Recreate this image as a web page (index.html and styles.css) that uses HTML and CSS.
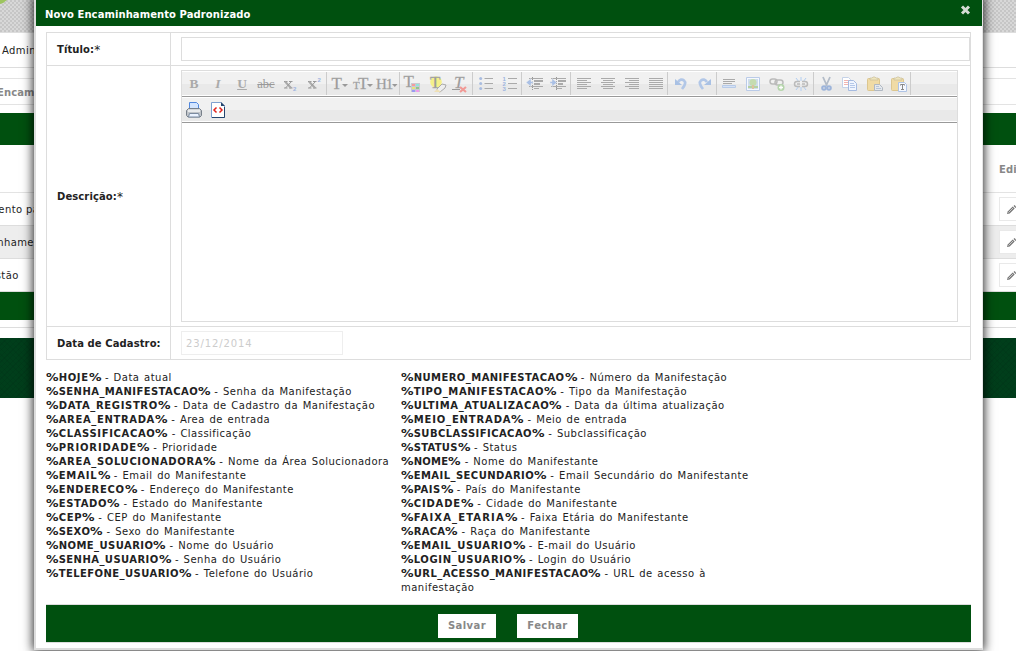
FILE: index.html
```
<!DOCTYPE html>
<html lang="pt-BR">
<head>
<meta charset="utf-8">
<title>Novo Encaminhamento Padronizado</title>
<link rel="stylesheet" href="styles.css">
</head>
<body>
<div class="page">
  <div class="banner"><svg class="leaf" width="9" height="6"><path d="M0 0h7Q4 3 0 4z" fill="#9dc45f"/></svg></div>
  <div class="nav">Administração</div>
  <div class="crumb"><span class="crumb-text">Encaminhamentos</span></div>
  <div class="bar bar-top"></div>
  <div class="list-head"><b>Editar</b></div>
  <div class="list-row"><span class="name n1">Encaminhamento padrão</span><span class="edit"><svg width="12" height="12" viewBox="0 0 12 12"><path d="M2 10l.7-2.500 5-5 2 2-5 5z" fill="#777"/><path d="M8.500 2l1-1 2 2-1 1z" fill="#777"/><path d="M3.500 8.500l4.500-4.500" stroke="#ddd" stroke-width=".8"/></svg></span></div>
  <div class="list-row alt"><span class="name n2">Encaminhamento</span><span class="edit"><svg width="12" height="12" viewBox="0 0 12 12"><path d="M2 10l.7-2.500 5-5 2 2-5 5z" fill="#777"/><path d="M8.500 2l1-1 2 2-1 1z" fill="#777"/><path d="M3.500 8.500l4.500-4.500" stroke="#ddd" stroke-width=".8"/></svg></span></div>
  <div class="list-row"><span class="name n3">Gestão</span><span class="edit"><svg width="12" height="12" viewBox="0 0 12 12"><path d="M2 10l.7-2.500 5-5 2 2-5 5z" fill="#777"/><path d="M8.500 2l1-1 2 2-1 1z" fill="#777"/><path d="M3.500 8.500l4.500-4.500" stroke="#ddd" stroke-width=".8"/></svg></span></div>
  <div class="bar bar-bottom"></div>
  <div class="footer"></div>
</div>

<div class="modal">
  <div class="modal-head"><span>Novo Encaminhamento Padronizado</span>
    <svg class="close" width="11" height="10" viewBox="0 0 11 10"><path d="M2 1.5l7 7M9 1.5l-7 7" stroke="#d5dcd5" stroke-width="3"/></svg>
  </div>
  <div class="form">
    <div class="label">Título:<i>*</i></div>
    <div class="field"><div class="input"></div></div>
    <div class="label">Descrição:<i>*</i></div>
    <div class="field">
      <div class="editor">
        <div class="tools">
          <div class="group">
            <span class="btn"><b class="g">B</b></span><span class="btn"><em class="g">I</em></span><span class="btn"><u class="g">U</u></span><span class="btn"><s class="g abc">abc</s></span>
            <span class="btn"><svg viewBox="0 0 24 24"><path d="M7.500 9.500l6 6.500M6 9.500h3.500M11 9.500h3.500M6 16h3.500M11 16h3.500" stroke="#999" fill="none"/><path d="M7 9.500l6 6.500" stroke="#aaa" stroke-width="2"/><path d="M13.500 9.500L7.500 16" stroke="#999"/><text x="15" y="19" class="num">2</text></svg></span>
            <span class="btn"><svg viewBox="0 0 24 24"><path d="M7.500 9.500l6 6.500M6 9.500h3.500M11 9.500h3.500M6 16h3.500M11 16h3.500" stroke="#999" fill="none"/><path d="M7 9.500l6 6.500" stroke="#aaa" stroke-width="2"/><path d="M13.500 9.500L7.500 16" stroke="#999"/><text x="15.500" y="10" class="num">2</text></svg></span>
          </div>
          <div class="group">
            <span class="btn"><svg viewBox="0 0 24 24"><text x="4.500" y="17" class="t">T</text><path d="M15 12h6l-3 3z" fill="#999"/></svg></span>
            <span class="btn"><svg viewBox="0 0 24 24"><text x="2" y="17" class="t small">T</text><text x="7" y="17" class="t">T</text><path d="M16 12h6l-3 3z" fill="#999"/></svg></span>
            <span class="btn"><svg viewBox="0 0 24 24"><text x="1" y="17" class="t h">H1</text><path d="M17 12h5.500l-2.700 3z" fill="#999"/></svg></span>
          </div>
          <div class="group">
            <span class="btn"><svg viewBox="0 0 24 24"><text x="3.500" y="15" class="t">T</text><path d="M11 11h9v9h-9z" fill="#c9c9d2"/><path d="M12 12h3v2h-3z" fill="#f59c9c"/><path d="M16 12h3v2h-3z" fill="#8fe6dc"/><path d="M12 15h3v2h-3z" fill="#e4e47c"/><path d="M16 15h3v2h-3z" fill="#93c58c"/><path d="M12 18h3v2h-3z" fill="#9a9af2"/><path d="M16 18h3v2h-3z" fill="#ee9cec"/></svg></span>
            <span class="btn"><svg viewBox="0 0 24 24"><circle cx="12" cy="10" r="5.800" fill="#f5f08a"/><text x="6" y="16" class="t">T</text><path d="M13 17l5-5 4 1-1 3-5 4-3-1z" fill="#eee" stroke="#aaa"/><path d="M10 20l3-3 4 3z" fill="#efe0b5"/></svg></span>
            <span class="btn"><svg viewBox="0 0 24 24"><text x="6" y="16" class="t it">T</text><path d="M4 17.500h8" stroke="#999"/><path d="M12 15l6 5M18 15l-6 5" stroke="#f19a96" stroke-width="2.200"/></svg></span>
          </div>
          <div class="group">
            <span class="btn"><svg viewBox="0 0 24 24"><path d="M11.500 6.500H20M11.500 11.500H20M11.500 16.500H20" stroke="#aaa"/><g fill="#a9bde0"><circle cx="7.700" cy="6.500" r="1.500"/><circle cx="7.700" cy="11.500" r="1.500"/><circle cx="7.700" cy="16.500" r="1.500"/></g></svg></span>
            <span class="btn"><svg viewBox="0 0 24 24"><path d="M11 6.500h9M11 11.500h9M11 16.500h9" stroke="#aaa"/><text x="5.500" y="9" class="num">1</text><text x="5.500" y="14" class="num">2</text><text x="5.500" y="19" class="num">3</text></svg></span>
          </div>
          <div class="group">
            <span class="btn"><svg viewBox="0 0 24 24"><path d="M7 6.500h14M12 16.500h5M7 14.500h14" stroke="#aaa"/><path d="M12 9h9M12 12h6" stroke="#aaa" stroke-width="2"/><path d="M10.500 5v14" stroke="#999" stroke-dasharray="1 1"/><path d="M4 10.500l5-4v3h2v2H9v3z" fill="#aac0e5" stroke="#efefef" stroke-width=".5"/></svg></span>
            <span class="btn"><svg viewBox="0 0 24 24"><path d="M5 6.500h15M10 16.500h6M5 14.500h15" stroke="#aaa"/><path d="M12 9h8M12 12h5" stroke="#aaa" stroke-width="2"/><path d="M10.500 5v14" stroke="#999" stroke-dasharray="1 1"/><path d="M11 10.500l-5-4v3H4v2h2v3z" fill="#aac0e5" stroke="#efefef" stroke-width=".5"/></svg></span>
          </div>
          <div class="group lines">
            <span class="btn"><svg viewBox="0 0 24 24"><path d="M6 6.500h14M6 8.500h10M6 10.500h14M6 12.500h10M6 14.500h14M6 16.500h10"/></svg></span>
            <span class="btn"><svg viewBox="0 0 24 24"><path d="M6 6.500h14M8 8.500h10M6 10.500h14M8 12.500h10M6 14.500h14M8 16.500h10"/></svg></span>
            <span class="btn"><svg viewBox="0 0 24 24"><path d="M6 6.500h14M10 8.500h10M6 10.500h14M10 12.500h10M6 14.500h14M10 16.500h10"/></svg></span>
            <span class="btn"><svg viewBox="0 0 24 24"><path d="M6 6.500h14M6 8.500h14M6 10.500h14M6 12.500h14M6 14.500h14M6 16.500h14"/></svg></span>
          </div>
          <div class="group">
            <span class="btn"><svg viewBox="0 0 24 24"><path d="M10 10q3-4 6-1.500t-2 8.500" fill="none" stroke="#b2c7e7" stroke-width="2.700"/><path d="M7 7v6h7z" fill="#a9c1e4"/></svg></span>
            <span class="btn"><svg viewBox="0 0 24 24"><path d="M15 10q-3-4-6-1.500t2 8.500" fill="none" stroke="#b2c7e7" stroke-width="2.700"/><path d="M19 7v6h-7z" fill="#a9c1e4"/></svg></span>
          </div>
          <div class="group">
            <span class="btn"><svg viewBox="0 0 24 24"><path d="M6 7.500h12M6 9.500h12M6 11.500h9" stroke="#aaa"/><path d="M5.500 13.500h13v2h-13z" fill="#d6e2f5" stroke="#b7cbe9"/></svg></span>
            <span class="btn"><svg viewBox="0 0 24 24"><path d="M5.500 5.500h13v13h-13z" fill="#f6f9fe" stroke="#bacbe8"/><path d="M7 7h10v10H7z" fill="#cfdded"/><circle cx="12" cy="10.500" r="3.500" fill="#c5dcb0"/><path d="M7 14h10v2H7z" fill="#b5d2a2"/><path d="M11 13h2v4h-2z" fill="#dcc3a0"/></svg></span>
            <span class="btn"><svg viewBox="0 0 24 24"><g fill="none" stroke="#bbb" stroke-width="1.500"><rect x="5" y="7" width="7" height="5" rx="2.500"/><rect x="10" y="8" width="8" height="5" rx="2.500"/></g><circle cx="16" cy="15.500" r="3.500" fill="#b5d5ab"/><path d="M14 15.500h4M16 13.500v4" stroke="#fff" stroke-width="1.300"/></svg></span>
            <span class="btn"><svg viewBox="0 0 24 24"><path d="M7 6l3 4M12 5v4M17 6l-3 4M7 18l3-4M12 19v-4M17 18l-3-4" stroke="#b2cef1"/><path d="M11 9.500H8q-2.500 0-2.500 2.500T8 14.500h3M13 9.500h3q2.500 0 2.500 2.500T16 14.500h-3M8 12h3M13 12h3" fill="none" stroke="#bbb" stroke-width="1.500"/></svg></span>
          </div>
          <div class="group">
            <span class="btn"><svg viewBox="0 0 24 24"><path d="M9 5l4 9M16 5l-4 9" stroke="#b3bcc8" stroke-width="1.800"/><g fill="none" stroke="#9db4da" stroke-width="2"><circle cx="10" cy="16" r="1.800"/><circle cx="15" cy="16" r="1.800"/></g></svg></span>
            <span class="btn"><svg viewBox="0 0 24 24"><path d="M4.500 5.500h6l2 2v8h-8z" fill="#fff" stroke="#c5d2e8"/><path d="M6 8.500h5M6 10.500h5M6 12.500h5" stroke="#f2b5b1"/><path d="M10.500 8.500h5l3 3v7h-8z" fill="#f0f5ff" stroke="#a6bbe0"/><path d="M12 11.500h4M12 13.500h5M12 15.500h5" stroke="#b5c8e8"/></svg></span>
            <span class="btn"><svg viewBox="0 0 24 24"><rect x="5.500" y="6.500" width="12" height="12" rx="1" fill="#f0dba5" stroke="#dcc68f"/><path d="M8 8V6h2l1-1h2l1 1h2v2z" fill="#eee5be" stroke="#c8bd9b" stroke-width=".7"/><path d="M12.500 12.500h5l3 3v3h-8z" fill="#e5e8ec" stroke="#b0b8c2"/><path d="M14 14.500h3M14 16.500h5" stroke="#b7c5d8"/></svg></span>
            <span class="btn"><svg viewBox="0 0 24 24"><rect x="5.500" y="6.500" width="12" height="12" rx="1" fill="#f0dba5" stroke="#dcc68f"/><path d="M8 8V6h2l1-1h2l1 1h2v2z" fill="#eee5be" stroke="#c8bd9b" stroke-width=".7"/><path d="M12.500 10.500h6l2 2v7h-8z" fill="#f5f8ff" stroke="#afc4e6"/><path d="M14.500 13.500v-1h4v1M16.500 12.500v5M15 17.500h3" fill="none" stroke="#888"/></svg></span>
          </div>
        </div>
        <div class="tools second">
          <span class="btn"><svg viewBox="0 0 24 24"><path d="M7.500 10V3.500h7l2 2V10z" fill="#d3e5ff" stroke="#5187dd"/><path d="M4.500 11.500l2-2h11l2 2v5l-1.500 1.500H6l-1.500-1.500z" fill="#bfc3c8" stroke="#777f89"/><path d="M6 10.500h12V13H6z" fill="#e9ebed"/><path d="M7.500 14.500h9l1 3.500h-11z" fill="#eaf2ff" stroke="#7b8ba0"/></svg></span>
          <span class="btn"><svg viewBox="0 0 24 24"><path d="M5.500 3.500h9.500l3.500 3.500v11.500h-13z" fill="#fff" stroke="#7ea0d0"/><path d="M6 18.500h12.500V8" fill="none" stroke="#24446d"/><path d="M15 3v4h4z" fill="#26456d"/><path d="M10.500 8.500L8 11l2.500 2.500M13.500 8.500L16 11l-2.500 2.500" fill="none" stroke="#e2231d" stroke-width="1.500"/></svg></span>
        </div>
        <div class="canvas"></div>
      </div>
    </div>
    <div class="label">Data de Cadastro:</div>
    <div class="field"><div class="input date">23/12/2014</div></div>
  </div>
  <div class="vars">
    <div class="col">
      <p class="s2"><b><i>%</i>HOJE<i>%</i></b> - Data atual</p>
      <p class="s1"><b><i>%</i>SENHA_MANIFESTACAO<i>%</i></b> - Senha da Manifestação</p>
      <p class="s2"><b><i>%</i>DATA_REGISTRO<i>%</i></b> - Data de Cadastro da Manifestação</p>
      <p class="s2"><b><i>%</i>AREA_ENTRADA<i>%</i></b> - Area de entrada</p>
      <p class="s2"><b><i>%</i>CLASSIFICACAO<i>%</i></b> - Classificação</p>
      <p class="s3"><b><i>%</i>PRIORIDADE<i>%</i></b> - Prioridade</p>
      <p class="s2"><b><i>%</i>AREA_SOLUCIONADORA<i>%</i></b> - Nome da Área Solucionadora</p>
      <p class="s3"><b><i>%</i>EMAIL<i>%</i></b> - Email do Manifestante</p>
      <p class="s2"><b><i>%</i>ENDERECO<i>%</i></b> - Endereço do Manifestante</p>
      <p class="s2"><b><i>%</i>ESTADO<i>%</i></b> - Estado do Manifestante</p>
      <p class="s2"><b><i>%</i>CEP<i>%</i></b> - CEP do Manifestante</p>
      <p class="s1"><b><i>%</i>SEXO<i>%</i></b> - Sexo do Manifestante</p>
      <p class="s1"><b><i>%</i>NOME_USUARIO<i>%</i></b> - Nome do Usuário</p>
      <p class="s1"><b><i>%</i>SENHA_USUARIO<i>%</i></b> - Senha do Usuário</p>
      <p class="s1"><b><i>%</i>TELEFONE_USUARIO<i>%</i></b> - Telefone do Usuário</p>
    </div>
    <div class="col">
      <p class="s1"><b><i>%</i>NUMERO_MANIFESTACAO<i>%</i></b> - Número da Manifestação</p>
      <p class="s2"><b><i>%</i>TIPO_MANIFESTACAO<i>%</i></b> - Tipo da Manifestação</p>
      <p class="s2"><b><i>%</i>ULTIMA_ATUALIZACAO<i>%</i></b> - Data da última atualização</p>
      <p class="s3"><b><i>%</i>MEIO_ENTRADA<i>%</i></b> - Meio de entrada</p>
      <p class="s1"><b><i>%</i>SUBCLASSIFICACAO<i>%</i></b> - Subclassificação</p>
      <p><b><i>%</i>STATUS<i>%</i></b> - Status</p>
      <p><b><i>%</i>NOME<i>%</i></b> - Nome do Manifestante</p>
      <p class="s1"><b><i>%</i>EMAIL_SECUNDARIO<i>%</i></b> - Email Secundário do Manifestante</p>
      <p class="s1"><b><i>%</i>PAIS<i>%</i></b> - País do Manifestante</p>
      <p class="s3"><b><i>%</i>CIDADE<i>%</i></b> - Cidade do Manifestante</p>
      <p class="s4"><b><i>%</i>FAIXA_ETARIA<i>%</i></b> - Faixa Etária do Manifestante</p>
      <p><b><i>%</i>RACA<i>%</i></b> - Raça do Manifestante</p>
      <p class="s2"><b><i>%</i>EMAIL_USUARIO<i>%</i></b> - E-mail do Usuário</p>
      <p class="s2"><b><i>%</i>LOGIN_USUARIO<i>%</i></b> - Login do Usuário</p>
      <p class="s1"><b><i>%</i>URL_ACESSO_MANIFESTACAO<i>%</i></b> - URL de acesso à<br>manifestação</p>
    </div>
  </div>
  <div class="actions"><span class="button save">Salvar</span><span class="button shut">Fechar</span></div>
</div>
</body>
</html>
```
FILE: styles.css
```
* { box-sizing: border-box; }
body { margin: 0; width: 1016px; height: 651px; overflow: hidden; position: relative; background: #fff; color: #222; font: 10px/14px "DejaVu Sans", sans-serif; letter-spacing: .4px; }
p { margin: 0; white-space: nowrap; }
b { letter-spacing: .1px; }

.page { height: 651px; display: flex; flex-direction: column; overflow: hidden; }
.banner { height: 33px; flex: none; background: repeating-conic-gradient(#c6c6c6 0 25%, #d8d8d8 0 50%) 0 0 / 4px 4px; border-bottom: 1px solid #ddd; }
.leaf { display: block; }
.nav { height: 35px; padding: 11px 2px; border-bottom: 1px solid #ddd; }
.crumb { height: 27px; margin-top: 10px; border: solid #e3e3e3; border-width: 1px 0; padding-top: 7px; color: #888; font-weight: bold; letter-spacing: .1px; }
.crumb-text { margin-left: -3px; }
.bar { background: #00500f; flex: none; }
.bar-top { height: 32px; margin-top: 8px; }
.list-head { height: 48px; border-bottom: 1px solid #e3e3e3; padding: 18px 0 0 999px; color: #888; white-space: nowrap; }
.list-row { height: 33px; display: flex; justify-content: space-between; align-items: center; border-bottom: 1px solid #ddd; overflow: hidden; }
.alt { background: #ededed; }
.name { white-space: nowrap; width: 200px; padding-top: 2px; }
.n1 { text-indent: -71px; }
.n2 { text-indent: -42px; }
.n3 { text-indent: -19px; }
.edit { width: 17px; height: 24px; border: 1px solid #e9e9e9; border-right: 0; background: #fff; padding: 6px 0 0 5px; flex: none; overflow: hidden; }
.bar-bottom { height: 28px; }
.footer { height: 71px; flex: none; margin-top: 7px; border-top: 1px solid #ddd; background: linear-gradient(#fff 0 10px, transparent 0), repeating-linear-gradient(45deg, transparent 0 3px, #00301533 3px 4px), repeating-linear-gradient(-45deg, #003e1b 0 3px, #003a1a 3px 4px); }

.modal { position: absolute; left: 34px; top: -4px; width: 949px; height: 654px; background: #fff; border: 2px solid #ddd; border-right-color: #e5e5e5; border-right-width: 1px; padding: 2px 11px 0 10px; box-shadow: 0 0 10px 1px rgba(0,0,0,.85); }
.modal-head { height: 26px; margin: 0 -11px 6px -10px; background: #00500f; color: #fff; font-weight: bold; padding: 8px 11px 0 9px; letter-spacing: .08px; display: flex; justify-content: space-between; }
.close { margin-top: -3px; }
.form { display: grid; grid-template-columns: 124px 1fr; grid-template-rows: 33px 261px 33px; border: solid #ddd; border-width: 1px 1px 0 1px; }
.label { border: solid #ddd; border-width: 0 1px 1px 0; padding: 2px 0 0 10px; font-weight: bold; display: flex; align-items: center; letter-spacing: .1px; }
.label i { font-style: normal; font-weight: normal; font-size: 12px; }
.field { border-bottom: 1px solid #ddd; padding: 4px 0 0 10px; }
.input { height: 24px; border: 1px solid #ddd; }
.date { width: 162px; border-color: #eee; color: #ccc; padding: 5px 4px; letter-spacing: .9px; }
.editor { width: 777px; height: 252px; border: 1px solid #ddd; padding-top: 1px; }
.tools { height: 25px; display: flex; border-bottom: 1px solid #999; background: linear-gradient(#f1f1f1 0 12px, #e9e9e9 12px 23px, #fff 23px); }
.second { height: 26px; padding-top: 2px; background: linear-gradient(#fff 0 1px, #f1f1f1 1px 13px, #e9e9e9 13px 24px, #fff 24px); }
.group { display: flex; height: 23px; border-right: 1px solid #ccc; }
.btn { width: 24px; height: 24px; display: block; text-align: center; }
.btn svg { display: block; width: 24px; height: 24px; }
.g { font: bold 13.5px/24px "Liberation Serif", serif; color: #aaa; letter-spacing: 0; }
em.g { font-style: italic; }
.abc { font-size: 12.5px; font-weight: normal; color: #999; margin: 0 -2px; }
.num { font: bold 6px "Liberation Sans", sans-serif; fill: #9db4df; letter-spacing: 0; }
.t { font: 17px "Liberation Serif", serif; fill: #999; stroke: #aaa; stroke-width: .3px; letter-spacing: 0; }
.small { font-size: 11px; }
.h { font-size: 15px; letter-spacing: -1.2px; }
.it { font-style: italic; }
.lines path { stroke: #aaa; }

.vars { display: grid; grid-template-columns: 355px 1fr; height: 244px; padding-top: 11px; letter-spacing: .48px; word-spacing: 1px; }
.vars b { letter-spacing: .28px; margin-right: -1.2px; }
.vars .s1 b { letter-spacing: .44px; }
.vars .s2 b { letter-spacing: .65px; }
.vars .s3 b { letter-spacing: .85px; }
.vars .s4 b { letter-spacing: 1.15px; }
.vars b i { display: inline-block; font-style: normal; width: 12.7px; transform: scaleX(1.25); transform-origin: left; letter-spacing: 0; }
.actions { height: 39px; border: solid #ddd; border-width: 1px 0; background: #00500f; display: flex; justify-content: center; gap: 21px; padding: 9px 1px 0 0; }
.button { height: 24px; width: 58px; background: #fff; color: #888; font-weight: bold; text-align: center; padding-top: 5px; }
.shut { width: 61px; }
```
